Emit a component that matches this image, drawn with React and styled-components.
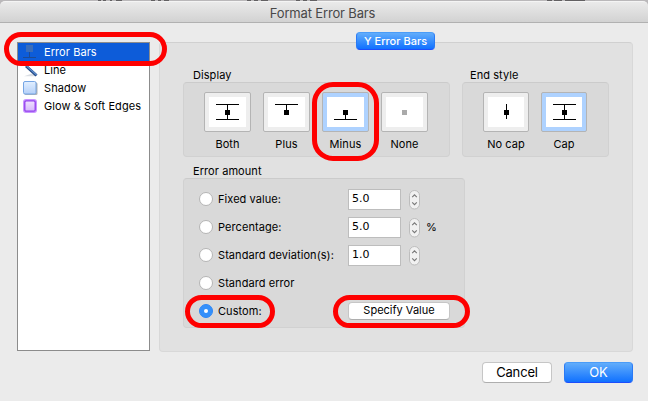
import React from "react";
import styled, { createGlobalStyle, css } from "styled-components";

const Global = createGlobalStyle`
  * { box-sizing: border-box; }
  body { margin: 0; background: #ebebeb; }
`;

const Window = styled.div`
  width: 648px;
  height: 401px;
  overflow: hidden;
  display: flex;
  flex-direction: column;
  background: #ebebeb;
  color: #000;
  font: 11px/18px Inter, "Liberation Sans", sans-serif;
`;

const Text = styled.span`
  display: block;
  white-space: nowrap;
  letter-spacing: ${(p) => p.$track ?? 0.07}px;
`;

const Backdrop = styled.div`
  flex: none;
  height: 6px;
  margin-bottom: -5px;
  background: #bab8ba;
`;

const BackdropMarks = styled.svg`
  display: block;
`;

const TitleBar = styled.header`
  flex: none;
  position: relative;
  height: 22px;
  border-radius: 5px 5px 0 0;
  border-top: 1px solid #f4f4f4;
  border-bottom: 1px solid #b1b1b1;
  background: linear-gradient(#eaeaea, #d2d2d2);
  display: flex;
  justify-content: center;
  padding-right: 3px;
  color: #484848;
  font-size: 13px;
  line-height: 22px;
`;

const Body = styled.main`
  display: flex;
  gap: 9px;
  padding: 19px 15px 0 17px;
`;

const Sidebar = styled.nav`
  position: relative;
  width: 133px;
  height: 309px;
  border: 1px solid #8c8c8c;
  background: #fff;
`;

const SidebarItem = styled.div`
  display: flex;
  align-items: center;
  gap: 6px;
  height: 18px;
  padding-left: 5px;
  line-height: 18px;
  ${(p) => p.$selected && css`background: #0d5cd9; color: #fff;`}
`;

const Highlight = styled.div`
  position: absolute;
  left: ${(p) => p.$x}px;
  top: ${(p) => p.$y}px;
  width: ${(p) => p.$w}px;
  height: ${(p) => p.$h}px;
  border: 5px solid #fe0000;
  border-radius: ${(p) => p.$r}px;
  pointer-events: none;
  z-index: 2;
`;

const Panel = styled.section`
  width: 474px;
  height: 310px;
  border: 1px solid #d8d8d8;
  border-top-color: #d0d0d0;
  border-radius: 4px;
  background: #e1e1e1;
  padding: 0 0 0 23px;
`;

const Tab = styled.div`
  width: 79px;
  height: 18px;
  margin: -11px 0 0 173px;
  border: 1px solid #2a7af5;
  border-bottom-color: #1d4dfb;
  border-top-color: #4a9cf8;
  border-radius: 4px;
  background: linear-gradient(#62adfb, #1071ff);
  color: #fff;
  font-weight: 500;
  line-height: 17px;
  display: flex;
  justify-content: center;
`;

const Groups = styled.div`
  display: flex;
  gap: 12px;
  margin-top: 16px;
`;

const GroupTitle = styled.div`
  height: 16px;
  padding-left: ${(p) => p.$indent || 10}px;
  line-height: 18px;
`;

const GroupBox = styled.div`
  position: relative;
  width: ${(p) => p.$w}px;
  height: ${(p) => p.$h}px;
  border: 1px solid #d1d1d1;
  border-top-color: #cbcbcb;
  border-radius: 4px;
  background: #d9d9d9;
`;

const Tiles = styled.div`
  display: flex;
  gap: 12px;
  padding: 9px 0 0 20px;
`;

const TileColumn = styled.div`
  display: flex;
  flex-direction: column;
  align-items: center;
  gap: 3px;
`;

const Tile = styled.div`
  width: ${(p) => p.$w}px;
  height: 40px;
  border: 1px solid #b4b4b4;
  border-radius: 2px;
  background: ${(p) => (p.$selected ? "#aed2ff" : "#eeeeee")};
  display: flex;
  align-items: center;
  justify-content: center;
`;

const TileArt = styled.svg`
  display: block;
  background: #fff;
`;

const AmountSection = styled.div`
  margin-top: 5px;
`;

const Rows = styled.div`
  display: flex;
  flex-direction: column;
  padding: 6px 0 0 15px;
`;

const Row = styled.div`
  display: flex;
  align-items: center;
  height: 28px;
`;

const Radio = styled.div`
  width: 14px;
  height: 14px;
  margin-right: 5px;
  border-radius: 50%;
  border: 1px solid ${(p) => (p.$on ? "#2f87f5" : "#b5b5b5")};
  background: ${(p) => (p.$on ? "#3490fb" : "#fff")};
  display: flex;
  align-items: center;
  justify-content: center;
`;

const Dot = styled.div`
  width: 4px;
  height: 4px;
  border-radius: 50%;
  background: #fff;
`;

const RowLabel = styled.div`
  width: 130px;
`;

const Field = styled.div`
  width: 53px;
  height: 21px;
  border: 1px solid #bdbdbd;
  background: #fff;
  padding-left: 3px;
  font-family: "DejaVu Sans", sans-serif;
  font-size: 11px;
  line-height: 18px;
`;

const StepperArt = styled.svg`
  display: block;
  margin: 1px 6px 0 8px;
`;

const Push = styled.button`
  width: ${(p) => p.$w}px;
  height: ${(p) => p.$h}px;
  padding: 0;
  border: 1px solid #c6c6c6;
  border-bottom-color: #aeaeae;
  border-radius: 4px;
  background: #fff;
  color: #000;
  font: inherit;
  font-size: ${(p) => p.$size || 11}px;
  line-height: ${(p) => p.$h - 3}px;
  display: flex;
  justify-content: center;
  ${(p) =>
    p.$primary &&
    css`
      border-color: #4a9cf8 #2a7af5 #1d4dfb;
      background: linear-gradient(#62adfb, #1071ff);
      color: #fff;
    `}
`;

const Footer = styled.footer`
  display: flex;
  justify-content: flex-end;
  gap: 12px;
  padding: 10px 15px 0 0;
`;

function ErrorBarsIcon() {
  return (
    <svg width="15" height="16" viewBox="0 0 15 16">
      <rect x="3" y="1" width="7" height="7" fill="#3a6dba" />
      <path d="M6.5 8v5" stroke="#1c4a94" />
      <path d="M0 13.5h13" stroke="#1c4a94" />
    </svg>
  );
}

function LineIcon() {
  return (
    <svg width="15" height="16" viewBox="0 0 15 16">
      <path d="M1 14.2h11l2-.7-5-2z" fill="#d9dde3" />
      <path d="M3 4l10.5 9.5" stroke="#234a86" strokeWidth="3" />
      <path d="M3.6 4l10 9" stroke="#5f8fd0" strokeWidth="1.1" />
    </svg>
  );
}

function ShadowIcon() {
  return (
    <svg width="15" height="16" viewBox="0 0 15 16">
      <defs>
        <linearGradient id="shadowFill" x2="0" y2="1">
          <stop stopColor="#e2efff" />
          <stop offset="1" stopColor="#b4d0f8" />
        </linearGradient>
      </defs>
      <rect x="1.5" y="2.5" width="13" height="12.5" rx="1.5" fill="#858a91" opacity=".65" />
      <rect x=".5" y="1.5" width="12.5" height="12.5" rx="1.5" fill="url(#shadowFill)" stroke="#75a5e4" />
    </svg>
  );
}

function GlowIcon() {
  return (
    <svg width="15" height="16" viewBox="0 0 15 16">
      <defs>
        <linearGradient id="glowFill" x2="0" y2="1">
          <stop stopColor="#f0e2ff" />
          <stop offset="1" stopColor="#d5b8fb" />
        </linearGradient>
      </defs>
      <rect x="0" y="1" width="14" height="14" rx="3" fill="#c995ff" />
      <rect x="1.8" y="2.8" width="10.4" height="10.4" rx="1.5" fill="url(#glowFill)" stroke="#9340ee" strokeWidth="1.3" />
    </svg>
  );
}

function BarArt({ top, bottom, stem, faded, w }) {
  return (
    <TileArt width={w} height="30" viewBox={`0 0 ${w} 30`} shapeRendering="crispEdges">
      {top && <path d="M7 7.5h23" stroke="#000" />}
      {bottom && <path d="M7 22.5h23" stroke="#000" />}
      {(top || stem) && <path d="M18.5 7v8" stroke="#000" />}
      {(bottom || stem) && <path d="M18.5 15v7" stroke="#000" />}
      <rect x="16" y="13" width="5" height="5" fill={faded ? "#aaa" : "#000"} />
    </TileArt>
  );
}

function Option({ label, selected, width, ...art }) {
  return (
    <TileColumn>
      <Tile $w={width} $selected={selected}>
        <BarArt w={width - 10} {...art} />
      </Tile>
      <Text>{label}</Text>
    </TileColumn>
  );
}

function Stepper() {
  return (
    <StepperArt width="11" height="20" viewBox="0 0 11 20">
      <rect x=".5" y=".5" width="10" height="18.5" rx="5" fill="#f1f1f1" stroke="#bdbdbd" />
      <path d="M3.2 7.1l2.3-2.3 2.3 2.3M3.2 12.3l2.3 2.3 2.3-2.3" fill="none" stroke="#777" strokeWidth="1.1" />
    </StepperArt>
  );
}

function AmountRow({ label, value, unit, on, children }) {
  return (
    <Row>
      <Radio $on={on}>{on && <Dot />}</Radio>
      <RowLabel><Text>{label}</Text></RowLabel>
      {value && <Field><Text $track={0}>{value}</Text></Field>}
      {value && <Stepper />}
      {unit}
      {children}
    </Row>
  );
}

export default function App() {
  return (
    <Window>
      <Global />
      <Backdrop>
        <BackdropMarks width="648" height="1">
          <path d="M98 .5h3m2 0h3m4 0h2m4 0h6M151 .5h4m3 0h3m3 0h5M247 .5h4m3 0h4m3 0h7M296 .5h4m3 0h4m3 0h7M547 .5h5m2 0h8m3 0h20" stroke="#626062" />
        </BackdropMarks>
      </Backdrop>
      <TitleBar><Text $track={-0.16}>Format Error Bars</Text></TitleBar>
      <Body>
        <Sidebar>
          <SidebarItem $selected><ErrorBarsIcon /><Text>Error Bars</Text></SidebarItem>
          <SidebarItem><LineIcon /><Text>Line</Text></SidebarItem>
          <SidebarItem><ShadowIcon /><Text>Shadow</Text></SidebarItem>
          <SidebarItem><GlowIcon /><Text>Glow &amp; Soft Edges</Text></SidebarItem>
          <Highlight $x={-14} $y={-11} $w={163} $h={34} $r={17} />
        </Sidebar>
        <Panel>
          <Tab><Text $track={0}>Y Error Bars</Text></Tab>
          <Groups>
            <div>
              <GroupTitle><Text>Display</Text></GroupTitle>
              <GroupBox $w={267} $h={75}>
                <Tiles>
                  <Option width={47} label="Both" top bottom />
                  <Option width={47} label="Plus" top />
                  <Option width={47} label="Minus" bottom selected />
                  <Option width={47} label="None" faded />
                </Tiles>
                <Highlight $x={128} $y={-1} $w={67} $h={79} $r={21} />
              </GroupBox>
            </div>
            <div>
              <GroupTitle $indent={8}><Text>End style</Text></GroupTitle>
              <GroupBox $w={147} $h={75}>
                <Tiles>
                  <Option width={46} label="No cap" stem />
                  <Option width={46} label="Cap" top bottom selected />
                </Tiles>
              </GroupBox>
            </div>
          </Groups>
          <AmountSection>
            <GroupTitle><Text>Error amount</Text></GroupTitle>
            <GroupBox $w={282} $h={150}>
              <Rows>
                <AmountRow label="Fixed value:" value="5.0" />
                <AmountRow label="Percentage:" value="5.0" unit="%" />
                <AmountRow label="Standard deviation(s):" value="1.0" />
                <AmountRow label="Standard error" />
                <AmountRow label="Custom:" on>
                  <Push $w={102} $h={18}><Text $track={0}>Specify Value</Text></Push>
                </AmountRow>
              </Rows>
              <Highlight $x={1} $y={116} $w={90} $h={33} $r={17} />
              <Highlight $x={149} $y={116} $w={137} $h={33} $r={17} />
            </GroupBox>
          </AmountSection>
        </Panel>
      </Body>
      <Footer>
        <Push $w={70} $h={21} $size={13}><Text $track={-0.15}>Cancel</Text></Push>
        <Push $w={69} $h={21} $size={13} $primary><Text $track={-0.1}>OK</Text></Push>
      </Footer>
    </Window>
  );
}
